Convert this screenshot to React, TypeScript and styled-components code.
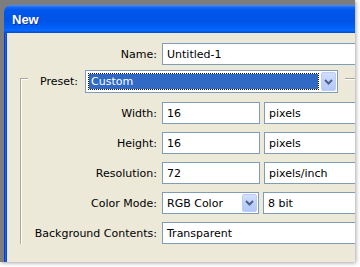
import React from "react";
import styled, { createGlobalStyle } from "styled-components";

const GlobalStyle = createGlobalStyle`
  html, body {
    margin: 0;
    padding: 0;
    background: #fff;
  }
  body {
    width: 360px;
    height: 267px;
    overflow: hidden;
    font-family: "DejaVu Sans", Tahoma, sans-serif;
  }
`;

const Shot = styled.div`
  width: 355px;
  height: 262px;
  box-sizing: border-box;
  padding: 5px 0 0 4px;
  background: #7d7d7d;
  overflow: hidden;
  box-shadow: 1px 1px 4px rgba(0, 0, 0, 0.35);
`;

const Window = styled.div`
  width: 420px;
  height: 300px;
  display: flex;
  flex-direction: column;
  border-radius: 7px 7px 0 0;
  overflow: hidden;
`;

const TitleBar = styled.div`
  height: 28px;
  flex: none;
  display: flex;
  align-items: center;
  padding-left: 8px;
  background: linear-gradient(
    #4a95ff 0,
    #1a6af6 2px,
    #0058ec 5px,
    #0053e6 55%,
    #0061f8 82%,
    #0a6bff 90%,
    #0049d6 100%
  );
  color: #fff;
  font: bold 13px "Liberation Sans", Arial, sans-serif;
  text-shadow: 1px 1px 0 #0c2f9e;
`;

const Frame = styled.div`
  flex: 1;
  display: flex;
  padding-left: 3px;
  background: linear-gradient(90deg, #0a3cc9 0 1px, #1c62f0 1px 2px, #0a4ad9 2px 3px);
`;

const Body = styled.div`
  flex: 1;
  background: #ece9d8;
  padding-top: 10px;
  display: flex;
  flex-direction: column;
  font-size: 11px;
  color: #000;
`;

const Row = styled.div`
  display: flex;
  align-items: center;
  gap: 4px;
  height: 22px;
`;

const Label = styled.div<{ $w: number }>`
  width: ${(p) => p.$w}px;
  flex: none;
  margin-right: 1px;
  text-align: right;
  white-space: nowrap;
`;

const Field = styled.div<{ $w: number }>`
  width: ${(p) => p.$w}px;
  height: 22px;
  flex: none;
  box-sizing: border-box;
  border: 1px solid #7f9db9;
  background: #fff;
  padding-left: 4px;
  display: flex;
  align-items: center;
  white-space: nowrap;
`;

const Combo = styled.div<{ $w: number; $h?: number }>`
  width: ${(p) => p.$w}px;
  height: ${(p) => p.$h ?? 22}px;
  flex: none;
  box-sizing: border-box;
  border: 1px solid #7f9db9;
  background: #fff;
  padding: 1px;
  display: flex;
  align-items: stretch;
  gap: 2px;
`;

const ComboText = styled.div`
  flex: 1;
  display: flex;
  align-items: center;
  padding-left: 3px;
  white-space: nowrap;
`;

const Selection = styled.div`
  flex: 1;
  display: flex;
  align-items: center;
  padding-left: 2px;
  margin: 1px 0 1px 1px;
  background-color: #316ac5;
  background-clip: padding-box;
  border: 1px dotted #111;
  color: #fff;
  white-space: nowrap;
`;

const ArrowButton = styled.div`
  width: 15px;
  flex: none;
  box-sizing: border-box;
  border: 1px solid #bccdf4;
  border-radius: 2px;
  background: linear-gradient(#d2defc, #bccffa 60%, #b3c8f7);
  display: flex;
  align-items: center;
  justify-content: center;
`;

const Group = styled.div`
  margin: 13px 0 0 13px;
  border-top: 1px solid #aca899;
  border-left: 1px solid #aca899;
  box-shadow: inset 1px 1px 0 #fff;
  display: flex;
  flex-direction: column;
`;

const LegendRow = styled.div`
  display: flex;
  margin-top: -9px;
  padding-left: 7px;
`;

const Legend = styled.div`
  display: flex;
  align-items: center;
  gap: 6px;
  padding: 0 7px 0 6px;
  background: #ece9d8;
`;

const Rows = styled.div`
  display: flex;
  flex-direction: column;
  gap: 8px;
  padding-top: 9px;
`;

const Chevron = () => (
  <svg width="9" height="6" viewBox="0 0 9 6">
    <polyline points="1,1 4.5,4.5 8,1" fill="none" stroke="#4d6185" strokeWidth="2" />
  </svg>
);

export default function App() {
  return (
    <>
      <GlobalStyle />
      <Shot>
        <Window>
          <TitleBar>New</TitleBar>
          <Frame>
            <Body>
              <Row>
                <Label $w={150}>Name:</Label>
                <Field $w={220}>Untitled-1</Field>
              </Row>
              <Group>
                <LegendRow>
                  <Legend>
                    <Label $w={44}>Preset:</Label>
                    <Combo $w={253} $h={23}>
                      <Selection>Custom</Selection>
                      <ArrowButton>
                        <Chevron />
                      </ArrowButton>
                    </Combo>
                  </Legend>
                </LegendRow>
                <Rows>
                  <Row>
                    <Label $w={136}>Width:</Label>
                    <Field $w={98}>16</Field>
                    <Field $w={130}>pixels</Field>
                  </Row>
                  <Row>
                    <Label $w={136}>Height:</Label>
                    <Field $w={98}>16</Field>
                    <Field $w={130}>pixels</Field>
                  </Row>
                  <Row>
                    <Label $w={136}>Resolution:</Label>
                    <Field $w={98}>72</Field>
                    <Field $w={130}>pixels/inch</Field>
                  </Row>
                  <Row>
                    <Label $w={136}>Color Mode:</Label>
                    <Combo $w={97}>
                      <ComboText>RGB Color</ComboText>
                      <ArrowButton>
                        <Chevron />
                      </ArrowButton>
                    </Combo>
                    <Field $w={130}>8 bit</Field>
                  </Row>
                  <Row>
                    <Label $w={136}>Background Contents:</Label>
                    <Combo $w={220}>
                      <ComboText>Transparent</ComboText>
                      <ArrowButton>
                        <Chevron />
                      </ArrowButton>
                    </Combo>
                  </Row>
                </Rows>
              </Group>
            </Body>
          </Frame>
        </Window>
      </Shot>
    </>
  );
}
